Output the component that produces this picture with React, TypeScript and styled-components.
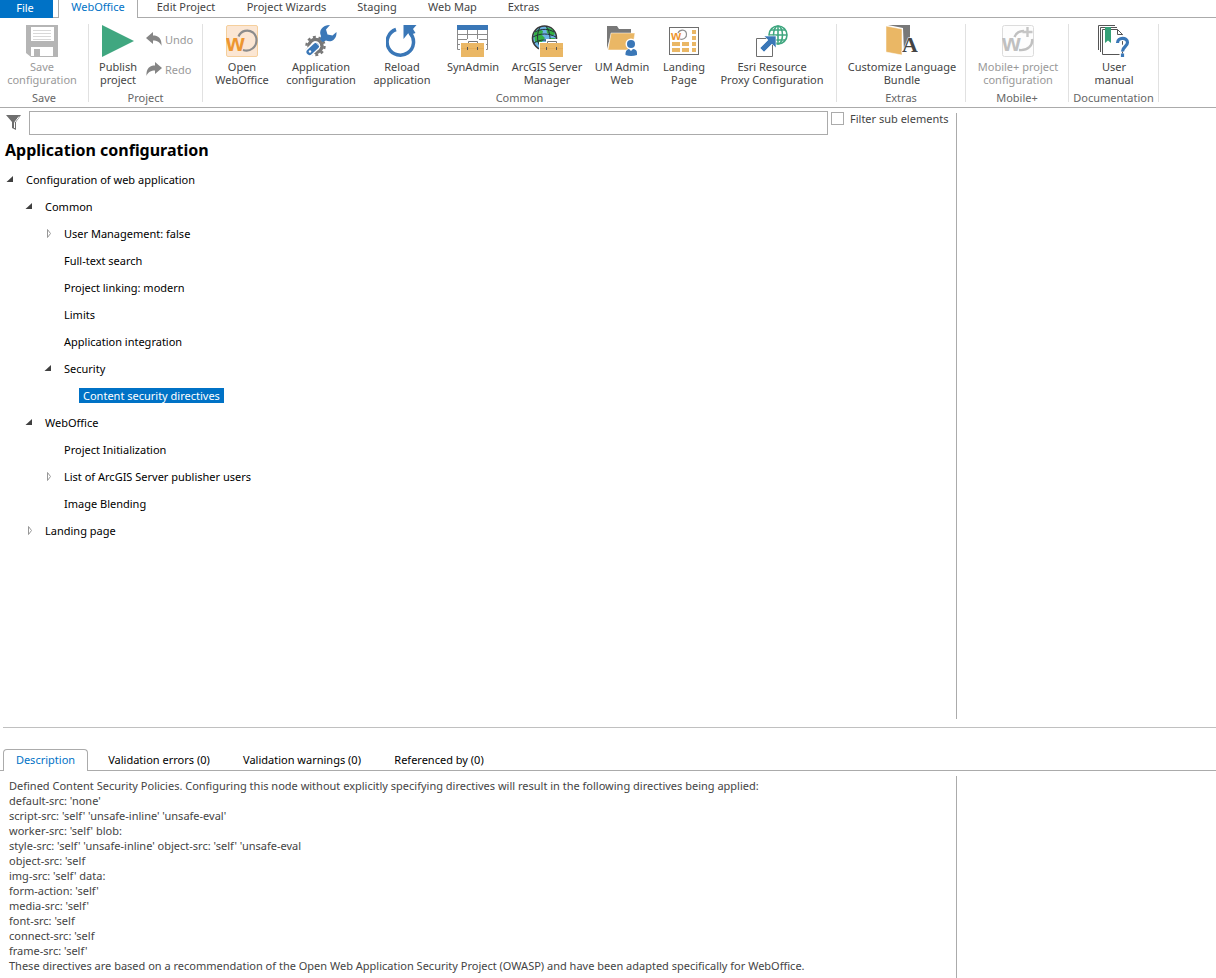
import React, { useState } from 'react';
import styled, { createGlobalStyle, css } from 'styled-components';

const GlobalStyle = createGlobalStyle`
  * { box-sizing: border-box; }
  body {
    margin: 0;
    background: #fff;
    color: #444;
    font-family: "Segoe UI", "Noto Sans", "Open Sans", sans-serif;
    font-size: 11px;
    line-height: 13px;
  }
  button, input { font: inherit; color: inherit; }
  button { border: 0; margin: 0; padding: 0; background: none; }
  svg { display: block; flex: none; }
`;

const Page = styled.div`
  display: flex;
  flex-direction: column;
  min-height: 100vh;
  overflow-x: hidden;
`;

/* ---------- Ribbon tabs ---------- */

const TabStrip = styled.nav`
  display: flex;
  height: 18px;
  border-bottom: 1px solid #ababab;
`;

const FileButton = styled.button`
  width: 53px;
  height: 18px;
  padding: 0 3px 4px 0;
  margin-right: 5px;
  background: #0072c6;
  color: #fff;
`;

const RibbonTab = styled.button<{ $width: number; $active?: boolean }>`
  width: ${(p) => p.$width}px;
  height: 17px;
  padding-bottom: 4px;
  white-space: nowrap;
  ${(p) =>
    p.$active &&
    css`
      height: 18px;
      padding-bottom: 5px;
      margin-right: 3px;
      border: solid #ababab;
      border-width: 0 1px;
      background: #fff;
      color: #0072c6;
    `}
`;

/* ---------- Ribbon ---------- */

const Ribbon = styled.div`
  display: flex;
  height: 90px;
  padding: 6px 0 5px;
  border-bottom: 1px solid #ababab;
`;

const Group = styled.section<{ $width: number }>`
  display: flex;
  flex: none;
  flex-direction: column;
  justify-content: space-between;
  width: ${(p) => p.$width}px;
  border-right: 1px solid #e1e1e1;
`;

const GroupItems = styled.div`
  display: flex;
  padding-left: 3px;
`;

const GroupName = styled.div`
  color: #666;
  line-height: 8px;
  text-align: center;
`;

const BigButton = styled.button<{ $width: number }>`
  display: flex;
  flex: none;
  flex-direction: column;
  align-items: center;
  gap: 3px;
  width: ${(p) => p.$width}px;
  padding-top: 1px;
  white-space: nowrap;
  &:disabled { color: #999; }
`;

const SmallButtons = styled.div`
  display: flex;
  flex-direction: column;
  gap: 14px;
  padding: 7px 0 0 2px;
`;

const SmallButton = styled.button`
  display: flex;
  align-items: center;
  gap: 3px;
  height: 16px;
  &:disabled { color: #999; }
`;

/* ---------- Work area ---------- */

const Workspace = styled.main`
  display: grid;
  grid-template-columns: minmax(0, 1fr) 260px;
  flex: 1;
  padding: 0 0 8px;
`;

const ConfigPane = styled.section`
  padding-top: 3px;
`;

const SidePane = styled.aside<{ $top: number }>`
  margin-top: ${(p) => p.$top}px;
  border-left: 1px solid #ababab;
`;

const FilterRow = styled.div`
  display: flex;
  align-items: flex-start;
  padding-left: 6px;
`;

const FilterIcon = styled.label`
  width: 23px;
  padding-top: 4px;
`;

const FilterInput = styled.input`
  flex: 1;
  min-width: 0;
  height: 24px;
  padding: 0 4px;
  border: 1px solid #ababab;
  background: #fff;
  outline: none;
`;

const CheckLabel = styled.label`
  display: flex;
  align-items: center;
  gap: 6px;
  width: 128px;
  height: 15px;
  padding-left: 3px;
  white-space: nowrap;
`;

const CheckBox = styled.input`
  appearance: none;
  width: 13px;
  height: 13px;
  margin: 0;
  border: 1px solid #ababab;
  background: #fff;
  &:checked { background: #0072c6; }
`;

const Heading = styled.h1`
  margin: 5px 0 6px 5px;
  color: #000;
  font-size: 16px;
  font-weight: 700;
  line-height: 20px;
`;

const TreeList = styled.ul`
  margin: 0;
  padding: 0;
  color: #000;
  list-style: none;
  & & { padding-left: 19px; }
`;

const TreeRow = styled.div`
  display: flex;
  align-items: center;
  height: 27px;
  padding-left: 6px;
`;

const Toggle = styled.button`
  width: 16px;
  height: 15px;
`;

const TreeLabel = styled.button<{ $selected: boolean }>`
  height: 15px;
  padding: 0 4px;
  white-space: nowrap;
  ${(p) => p.$selected && css`background: #0072c6; color: #fff;`}
`;

/* ---------- Details ---------- */

const Details = styled.section`
  margin-top: auto;
`;

const DetailTabs = styled.div`
  display: flex;
  align-items: flex-end;
  height: 43px;
  margin-left: 3px;
  border-top: 1px solid #c0c0c0;
`;

const DetailTab = styled.button<{ $width: number; $active: boolean }>`
  width: ${(p) => p.$width}px;
  height: 21px;
  padding-bottom: 2px;
  border: 1px solid transparent;
  border-bottom: 0;
  color: #000;
  white-space: nowrap;
  ${(p) =>
    p.$active &&
    css`
      height: 22px;
      padding-bottom: 3px;
      margin-bottom: -1px;
      border-color: #ababab;
      border-radius: 4px 4px 0 0;
      background: #fff;
      color: #0072c6;
    `}
`;

const DetailBody = styled.div`
  display: grid;
  grid-template-columns: minmax(0, 1fr) 260px;
  border-top: 1px solid #ababab;
`;

const Description = styled.div`
  padding: 7px 9px 5px;
  line-height: 15px;
`;

/* ---------- Icons ---------- */

const Icon = ({ children, w = 32, h = 32 }: { children: React.ReactNode; w?: number; h?: number }) => (
  <svg width={w} height={h} viewBox={`0 0 ${w} ${h}`} aria-hidden="true">{children}</svg>
);

const SaveIcon = () => (
  <Icon>
    <path d="M0 0H32V32H5L0 28Z" fill="#b5b5b5" />
    <path d="M5 2H28V16H5Z" fill="#fff" />
    <path d="M7 5.500H25M7 8.500H25M7 11.500H25M7 14.500H25" stroke="#d8d8d8" />
    <path d="M5 22H27V31H5Z" fill="#fff" />
    <path d="M8 24H14V31H8Z" fill="#b5b5b5" />
  </Icon>
);

const PublishIcon = () => <Icon><path d="M0 0L32 16L0 32Z" fill="#40a780" /></Icon>;

const UndoIcon = () => (
  <Icon w={16} h={14}>
    <path d="M0 6L7 0V3.500C12 3.500 16 6 15.500 14C14 10 11 8.500 7 8.500V12Z" fill="#858585" />
  </Icon>
);

const RedoIcon = () => (
  <Icon w={16} h={14}>
    <path d="M16 6L9 0V3.500C4 3.500 0 6 .5 14C2 10 5 8.500 9 8.500V12Z" fill="#858585" />
  </Icon>
);

const WebOfficeIcon = () => (
  <Icon>
    <rect x=".5" y=".5" width="31" height="31" rx="1.500" fill="#fbe6d3" stroke="#f5cf9c" />
    <path d="M12.500 11.500C15 5.500 22 4 27 7.500C32 12 31.500 19.500 26.500 23.500C24 25.500 20 26 17 25" fill="none" stroke="#8c8c8c" strokeWidth="2.200" />
    <text x="0" y="26" fontFamily="Liberation Sans" fontSize="24" fontWeight="700" fill="#ed9630">w</text>
  </Icon>
);

const AppConfigIcon = () => (
  <Icon>
    <circle cx="10.500" cy="21" r="6.500" fill="none" stroke="#787878" strokeWidth="3.500" />
    <circle cx="10.500" cy="21" r="9" fill="none" stroke="#787878" strokeWidth="2.400" strokeDasharray="2.900 2.750" />
    <path d="M4.500 27L10.500 21" stroke="#fff" strokeWidth="9" strokeLinecap="round" />
    <path d="M4.500 27L11 21" stroke="#3a77b7" strokeWidth="6" strokeLinecap="round" />
    <path d="M10 16.500L15 21.500" stroke="#fff" strokeWidth="1" />
    <circle cx="5" cy="26.500" r="1.200" fill="#fff" />
    <path d="M25 0C17 0 13.500 6 16 11L15 14.500L17.500 17L21 15.500C26 18 32 14.500 31.500 7L27.500 10.500L22.500 9.500L21 4.500Z" fill="#3a77b7" />
  </Icon>
);

const ReloadIcon = () => (
  <Icon>
    <path d="M10 4.500A13.200 13.200 0 1 0 24 8" fill="none" stroke="#3a77b7" strokeWidth="3.500" />
    <path d="M17.500 0H30.500L27 4L29.500 8L25 9.500L22 8.500L17.500 14Z" fill="#3a77b7" />
  </Icon>
);

const Briefcase = ({ x }: { x: number }) => (
  <g transform={`translate(${x} 15)`}>
    <path d="M-1 2H6V-1H18V2H25V17H-1Z" fill="#fff" />
    <path d="M7.500 3V1.500H16.500V3" fill="none" stroke="#777" />
    <path d="M0 3H23V8H0ZM0 9H23V17H0Z" fill="#eab765" />
    <path d="M0 8H23V9H0Z" fill="#e6ae57" />
    <path d="M6 7H7V10H6ZM16 7H17V10H16Z" fill="#555" />
  </g>
);

const SynAdminIcon = () => (
  <Icon>
    <path d="M.5 4V24.500H30.500V4M.5 9.500H30.500M.5 14.500H30.500M.5 19.500H30.500M10.500 4V24M20.500 4V24" fill="none" stroke="#8a8a8a" />
    <path d="M0 0H31V5H0Z" fill="#3a77b7" />
    <Briefcase x={4} />
  </Icon>
);

const ArcGisIcon = () => (
  <Icon>
    <circle cx="13.500" cy="13" r="12" fill="#6cb2e4" stroke="#3a3a3a" strokeWidth="1.600" />
    <path d="M3 8L8 4L12 6L11 10L14 13L10 18L4 17ZM15 2L21 4L24 9L21 11L16 8ZM19 13L24 13L22 19L18 18Z" fill="#35b044" />
    <path d="M2 12C9 8 18 8 25 12M3 18C9 14 17 14 24 18M9 2C5 10 6 18 11 25M15 1C20 8 20 17 17 25M4 7C11 3 18 4 23 7" fill="none" stroke="#23323a" />
    <Briefcase x={9} />
  </Icon>
);

const UmAdminIcon = () => (
  <Icon>
    <path d="M1 1H11L13 4H25V9H5L1 24Z" fill="#787878" />
    <path d="M5 8H29L26 25H2Z" fill="#eab765" stroke="#fff" strokeWidth=".5" />
    <circle cx="25" cy="19" r="5.500" fill="#fff" />
    <path d="M18 32V27C19 23 31 23 32 27V32Z" fill="#fff" />
    <circle cx="25" cy="19" r="4" fill="#3a77b7" />
    <path d="M19.500 30V28C20 25 22 24 23 24L25 26L27 24C29 24 31 25 31 28V30Q25 32 19.500 30Z" fill="#3a77b7" />
  </Icon>
);

const LandingIcon = () => (
  <Icon>
    <rect x="1.500" y="2.500" width="29" height="27" fill="#fff" stroke="#6e6e6e" />
    <path d="M10 8C12 4 18 4 18.500 9C19 13 15 15 12 14" fill="none" stroke="#909090" strokeWidth="1.200" />
    <text x="3" y="15" fontFamily="Liberation Sans" fontSize="13" fontWeight="700" fill="#ed9630">w</text>
    <path d="M24 5H28V9H24ZM24 11H28V15H24ZM4 17H12V21H4ZM14 17H21V21H14ZM24 17H28V21H24ZM4 23H12V27H4ZM14 23H21V27H14ZM24 23H28V27H24Z" fill="#eab765" />
  </Icon>
);

const EsriIcon = () => (
  <Icon>
    <g fill="none" stroke="#40a780" strokeWidth="1.600">
      <circle cx="22" cy="10" r="9" />
      <ellipse cx="22" cy="10" rx="4.500" ry="9" />
      <path d="M22 1V19M13 10H31M15 5H29M15 15H29" />
    </g>
    <path d="M.5 13.500H16.500V31.500H.5Z" fill="#fff" stroke="#6e6e6e" />
    <path d="M8 11H20V23L16 19L8 27L4 23L12 15Z" fill="#3a77b7" stroke="#fff" strokeWidth=".6" />
  </Icon>
);

const LanguageIcon = () => (
  <Icon>
    <path d="M2 0H24V12L18 27L17 3Z" fill="#787878" />
    <path d="M0 1L16 4V30L0 27Z" fill="#eab765" stroke="#fff" strokeWidth=".5" />
    <text x="16" y="27" fontFamily="Liberation Serif" fontSize="22" fontWeight="700" fill="#444" stroke="#fff" strokeWidth="1" paintOrder="stroke">A</text>
  </Icon>
);

const MobileIcon = () => (
  <Icon>
    <rect x=".5" y=".5" width="31" height="31" rx="2" fill="#fdfdfd" stroke="#dcdcdc" />
    <path d="M12.500 12C14 8 18 6 22 6M30 14C31 20 26 26 17 25" fill="none" stroke="#c0c0c0" strokeWidth="2.400" />
    <path d="M25.500 2V12M20.500 7H30.500" stroke="#c6c6c6" strokeWidth="2.400" />
    <text x="0" y="26" fontFamily="Liberation Sans" fontSize="24" fontWeight="700" fill="#c0c0c0">w</text>
  </Icon>
);

const ManualIcon = () => (
  <Icon>
    <path d="M.5 25V.5H17M2.500 27V2.500H19" fill="none" stroke="#555" />
    <path d="M4.500 29.500V4.500H19.500L24.500 9.500V29.500Z" fill="#fff" stroke="#555" />
    <path d="M19.500 4.500V9.500H24.500" fill="none" stroke="#555" />
    <path d="M7 2H13V18L10 15.500L7 18Z" fill="#35a077" />
    <g fill="none" strokeLinejoin="round">
      <path d="M19.500 17.500C20 11.500 29.500 11.500 29.500 17C29.500 21.500 24.500 21 24.500 26.500M24.500 28.500V32" stroke="#fff" strokeWidth="6" />
      <path d="M19.500 18C19.500 12 29.500 12 29.500 17.500C29.500 21.500 24.500 21.500 24.500 26.500M24.500 28.500V32" stroke="#3a77b7" strokeWidth="3.200" />
    </g>
  </Icon>
);

const FunnelIcon = () => (
  <Icon w={16} h={16}>
    <path d="M0 0H15L10 7V15L6 13V7Z" fill="#6e6e6e" />
    <path d="M13 1.500L8.500 7.500V13" fill="none" stroke="#fff" />
  </Icon>
);

const ExpandedMark = () => <Icon w={7} h={15}><path d="M7 4V10H.5Z" fill="#404040" /></Icon>;
const CollapsedMark = () => (
  <Icon w={7} h={15}><path d="M3.500 3.500L6.500 7.500L3.500 11.500Z" fill="#fff" stroke="#989898" /></Icon>
);

/* ---------- Data ---------- */

type Command = { lines: string[]; icon: React.ReactNode; width: number };

const commonCommands: Command[] = [
  { lines: ['Open', 'WebOffice'], icon: <WebOfficeIcon />, width: 72 },
  { lines: ['Application', 'configuration'], icon: <AppConfigIcon />, width: 86 },
  { lines: ['Reload', 'application'], icon: <ReloadIcon />, width: 76 },
  { lines: ['SynAdmin'], icon: <SynAdminIcon />, width: 66 },
  { lines: ['ArcGIS Server', 'Manager'], icon: <ArcGisIcon />, width: 82 },
  { lines: ['UM Admin', 'Web'], icon: <UmAdminIcon />, width: 68 },
  { lines: ['Landing', 'Page'], icon: <LandingIcon />, width: 56 },
  { lines: ['Esri Resource', 'Proxy Configuration'], icon: <EsriIcon />, width: 120 },
];

const ribbonTabs = [
  { name: 'WebOffice', width: 80 },
  { name: 'Edit Project', width: 90 },
  { name: 'Project Wizards', width: 111 },
  { name: 'Staging', width: 70 },
  { name: 'Web Map', width: 81 },
  { name: 'Extras', width: 61 },
];

const detailTabs = [
  { name: 'Description', width: 85 },
  { name: 'Validation errors (0)', width: 142 },
  { name: 'Validation warnings (0)', width: 144 },
  { name: 'Referenced by (0)', width: 130 },
];

type Node = { name: string; open?: boolean; children?: Node[] };

const tree: Node = {
  name: 'Configuration of web application',
  open: true,
  children: [
    {
      name: 'Common',
      open: true,
      children: [
        { name: 'User Management: false', open: false, children: [] },
        { name: 'Full-text search' },
        { name: 'Project linking: modern' },
        { name: 'Limits' },
        { name: 'Application integration' },
        { name: 'Security', open: true, children: [{ name: 'Content security directives' }] },
      ],
    },
    {
      name: 'WebOffice',
      open: true,
      children: [
        { name: 'Project Initialization' },
        { name: 'List of ArcGIS Server publisher users', open: false, children: [] },
        { name: 'Image Blending' },
      ],
    },
    { name: 'Landing page', open: false, children: [] },
  ],
};

const description = [
  'Defined Content Security Policies. Configuring this node without explicitly specifying directives will result in the following directives being applied:',
  "default-src: 'none'",
  "script-src: 'self' 'unsafe-inline' 'unsafe-eval'",
  "worker-src: 'self' blob:",
  "style-src: 'self' 'unsafe-inline' object-src: 'self' 'unsafe-eval",
  "object-src: 'self",
  "img-src: 'self' data:",
  "form-action: 'self'",
  "media-src: 'self'",
  "font-src: 'self",
  "connect-src: 'self",
  "frame-src: 'self'",
  'These directives are based on a recommendation of the Open Web Application Security Project (OWASP) and have been adapted specifically for WebOffice.',
];

/* ---------- Components ---------- */

const RibbonCommand = ({ lines, icon, width, disabled }: Command & { disabled?: boolean }) => (
  <BigButton $width={width} disabled={disabled}>
    {icon}
    <span>
      {lines.map((line, i) => (
        <React.Fragment key={line}>
          {i > 0 && <br />}
          {line}
        </React.Fragment>
      ))}
    </span>
  </BigButton>
);

type TreeNodeProps = { node: Node; selected: string; onSelect: (name: string) => void };

const TreeNode = ({ node, selected, onSelect }: TreeNodeProps) => {
  const [open, setOpen] = useState(!!node.open);
  return (
    <li role="treeitem" aria-selected={selected === node.name} aria-expanded={node.children ? open : undefined}>
      <TreeRow>
        {node.children ? (
          <Toggle aria-label={`Toggle ${node.name}`} onClick={() => setOpen(!open)}>
            {open ? <ExpandedMark /> : <CollapsedMark />}
          </Toggle>
        ) : (
          <Toggle as="span" />
        )}
        <TreeLabel $selected={selected === node.name} onClick={() => onSelect(node.name)}>
          {node.name}
        </TreeLabel>
      </TreeRow>
      {open && node.children && (
        <TreeList role="group">
          {node.children.map((child) => (
            <TreeNode key={child.name} node={child} selected={selected} onSelect={onSelect} />
          ))}
        </TreeList>
      )}
    </li>
  );
};

export default function App() {
  const [selected, setSelected] = useState('Content security directives');
  const [ribbonTab, setRibbonTab] = useState('WebOffice');
  const [detailTab, setDetailTab] = useState('Description');

  return (
    <Page>
      <GlobalStyle />
      <TabStrip>
        <FileButton>File</FileButton>
        {ribbonTabs.map((t) => (
          <RibbonTab key={t.name} $width={t.width} $active={t.name === ribbonTab} onClick={() => setRibbonTab(t.name)}>
            {t.name}
          </RibbonTab>
        ))}
      </TabStrip>

      <Ribbon>
        <Group $width={89}>
          <GroupItems>
            <RibbonCommand lines={['Save', 'configuration']} icon={<SaveIcon />} width={78} disabled />
          </GroupItems>
          <GroupName>Save</GroupName>
        </Group>
        <Group $width={114}>
          <GroupItems>
            <RibbonCommand lines={['Publish', 'project']} icon={<PublishIcon />} width={52} />
            <SmallButtons>
              <SmallButton disabled><UndoIcon />Undo</SmallButton>
              <SmallButton disabled><RedoIcon />Redo</SmallButton>
            </SmallButtons>
          </GroupItems>
          <GroupName>Project</GroupName>
        </Group>
        <Group $width={634}>
          <GroupItems>
            {commonCommands.map((c) => <RibbonCommand key={c.lines[0]} {...c} />)}
          </GroupItems>
          <GroupName>Common</GroupName>
        </Group>
        <Group $width={129}>
          <GroupItems>
            <RibbonCommand lines={['Customize Language', 'Bundle']} icon={<LanguageIcon />} width={124} />
          </GroupItems>
          <GroupName>Extras</GroupName>
        </Group>
        <Group $width={103}>
          <GroupItems>
            <RibbonCommand lines={['Mobile+ project', 'configuration']} icon={<MobileIcon />} width={98} disabled />
          </GroupItems>
          <GroupName>Mobile+</GroupName>
        </Group>
        <Group $width={90}>
          <GroupItems>
            <RibbonCommand lines={['User', 'manual']} icon={<ManualIcon />} width={84} />
          </GroupItems>
          <GroupName>Documentation</GroupName>
        </Group>
      </Ribbon>

      <Workspace>
        <ConfigPane>
          <FilterRow>
            <FilterIcon htmlFor="tree-filter" aria-label="Filter"><FunnelIcon /></FilterIcon>
            <FilterInput id="tree-filter" type="text" />
            <CheckLabel><CheckBox type="checkbox" />Filter sub elements</CheckLabel>
          </FilterRow>
          <Heading>Application configuration</Heading>
          <TreeList role="tree">
            <TreeNode node={tree} selected={selected} onSelect={setSelected} />
          </TreeList>
        </ConfigPane>
        <SidePane $top={5} />
      </Workspace>

      <Details>
        <DetailTabs>
          {detailTabs.map((t) => (
            <DetailTab key={t.name} $width={t.width} $active={t.name === detailTab} onClick={() => setDetailTab(t.name)}>
              {t.name}
            </DetailTab>
          ))}
        </DetailTabs>
        <DetailBody>
          <Description>
            {description.map((line) => <div key={line}>{line}</div>)}
          </Description>
          <SidePane $top={5} />
        </DetailBody>
      </Details>
    </Page>
  );
}
